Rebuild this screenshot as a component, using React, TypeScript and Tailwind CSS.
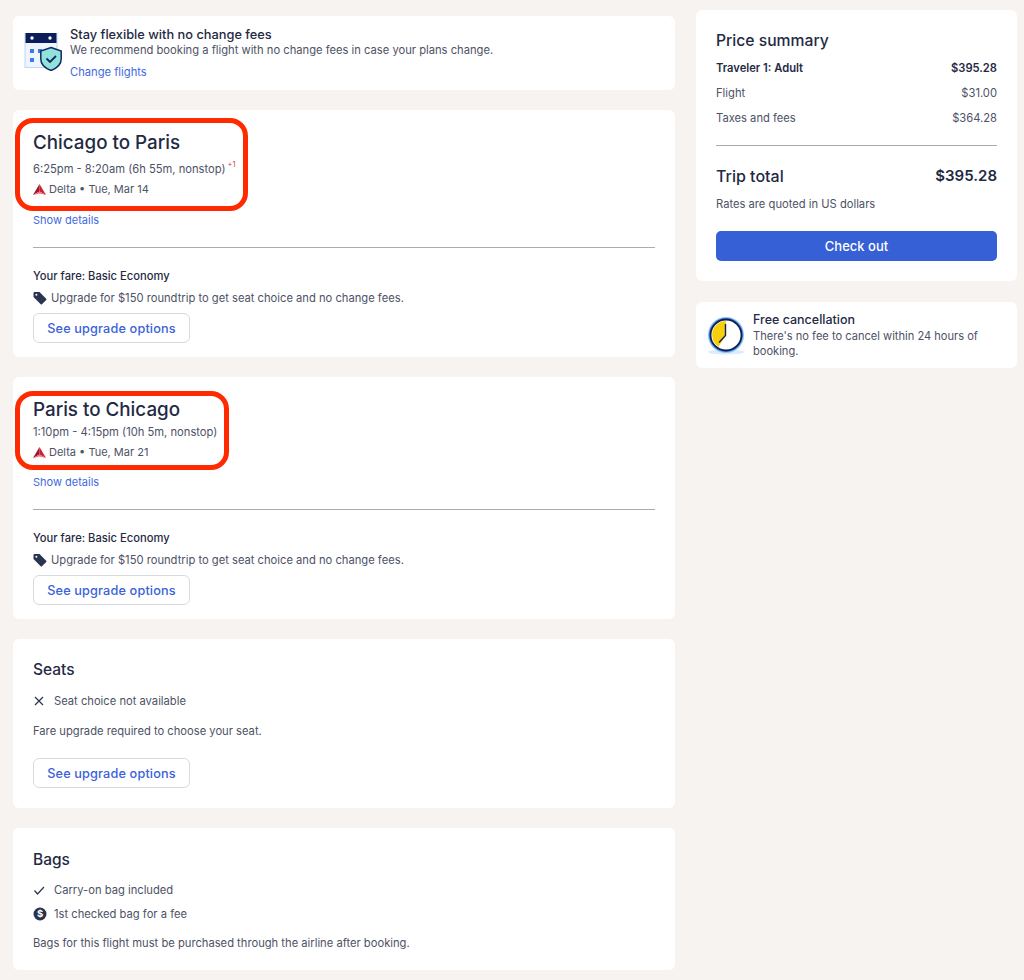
import React from "react";

const ink = "text-[#1f2a44]";
const body = "text-[#4d5266]";

function DeltaLogo() {
  return (
    <svg width="13" height="11" viewBox="0 0 13 11" className="shrink-0">
      <path d="M6.5 0 L13 11 L6.5 7.6 Z" fill="#d0202f" />
      <path d="M6.5 0 L0 11 L6.5 7.6 Z" fill="#a01530" />
      <path d="M0 11 L6.5 7.6 L13 11 L6.5 9.4 Z" fill="#e8707a" />
    </svg>
  );
}

function TagIcon() {
  return (
    <svg width="14" height="14" viewBox="0 0 14 14" className="shrink-0">
      <path d="M0.5 2 Q0.5 1 1.5 1 L6.5 1 L13.2 7.7 Q13.8 8.3 13.2 8.9 L8.9 13.2 Q8.3 13.8 7.7 13.2 L0.5 6 Z" fill="#2a3350" />
      <circle cx="3.4" cy="3.8" r="1" fill="#fff" />
    </svg>
  );
}

function Shield() {
  return (
    <svg width="38" height="42" viewBox="0 0 38 42" className="shrink-0">
      <rect x="1" y="4.5" width="32" height="34" fill="#eef5fd" stroke="#bcd8f8" strokeWidth="1" />
      <rect x="1.5" y="4" width="31" height="10" fill="#0b1e5b" />
      <circle cx="8" cy="9" r="1.7" fill="#fff" />
      <circle cx="26" cy="9" r="1.7" fill="#fff" />
      <rect x="6" y="20" width="4" height="4" fill="#3f7be8" />
      <rect x="14" y="20" width="4" height="4" fill="#3f7be8" />
      <rect x="6" y="29" width="4" height="4" fill="#3f7be8" />
      <path d="M27 18.5 L37.2 22 V30 Q37.2 37.5 27 41.5 Q16.8 37.5 16.8 30 V22 Z" fill="#8fe3dc" stroke="#14285f" strokeWidth="1.5" />
      <path d="M22.5 29.5 L26 33 L32 27" fill="none" stroke="#14285f" strokeWidth="1.8" />
    </svg>
  );
}

function ClockIcon() {
  return (
    <svg width="38" height="38" viewBox="0 0 38 38" className="shrink-0">
      <ellipse cx="19" cy="35" rx="18" ry="2.5" fill="#dcecfd" />
      <circle cx="19" cy="18" r="18" fill="#8cc2f8" />
      <circle cx="19" cy="18" r="17" fill="#3b8bef" />
      <circle cx="19" cy="18" r="15.5" fill="#fff" stroke="#11204f" strokeWidth="1.8" />
      <path d="M19 18 V4 A14 14 0 0 0 11.5 29.8 Z" fill="#f9cf0c" />
      <path d="M18.5 7 V18.5 L12 25.5" fill="none" stroke="#11204f" strokeWidth="1.4" />
    </svg>
  );
}

function UpgradeButton() {
  return (
    <button className="h-[30px] w-[157px] rounded-[6px] border border-[#d9dade] bg-white pt-[1px] text-[12.7px] font-medium tracking-[0.15px] text-[#3a62d8]">
      See upgrade options
    </button>
  );
}

function Flight({ title, time, plus, date, ringClass, timeClass, detailsClass, height }: { title: string; time: string; plus?: boolean; date: string; ringClass: string; timeClass: string; detailsClass: string; height: string }) {
  return (
    <section className={`relative rounded-[6px] bg-white px-5 pt-[20px] ${height}`}>
      <div className={`absolute rounded-[18px] border-[5px] border-[#ff2a00] ${ringClass}`} />
      <h2 className={`text-[18.8px] leading-[26px] font-medium ${ink}`}>{title}</h2>
      <div className={`flex items-start text-[11.2px] leading-[18px] ${body} ${timeClass}`}>
        {time}
        {plus && <span className="mt-[-4px] ml-[2px] text-[7.5px] text-[#d9403a]">+1</span>}
      </div>
      <div className={`mt-[2px] flex items-center gap-[3px] text-[11px] leading-[18px] ${body}`}>
        <DeltaLogo />
        <span>Delta • {date}</span>
      </div>
      <a className={`block text-[11px] leading-[16px] text-[#3f6ae0] ${detailsClass}`}>Show details</a>
      <hr className="mt-[19px] border-t border-[#a9abb2]" />
      <div className={`mt-[20px] text-[11.2px] leading-[16px] font-medium ${ink}`}>Your fare: Basic Economy</div>
      <div className={`mt-[5px] flex items-center gap-[4px] text-[11.2px] leading-[18px] ${body}`}>
        <TagIcon />
        <span>Upgrade for $150 roundtrip to get seat choice and no change fees.</span>
      </div>
      <div className="mt-[6px]">
        <UpgradeButton />
      </div>
    </section>
  );
}

function Row({ l, r, bold }: { l: string; r: string; bold?: boolean }) {
  return (
    <div className={`flex h-[25px] items-center justify-between text-[11.2px] ${bold ? `font-semibold ${ink}` : body}`}>
      <span>{l}</span>
      <span>{r}</span>
    </div>
  );
}

export default function App() {
  return (
    <div className="flex h-[980px] w-[1024px] items-start gap-[21px] overflow-hidden bg-[#f6f3f1] pl-[13px] font-['Inter',sans-serif]">
      <main className="mt-[16px] flex w-[662px] flex-col gap-[20px]">
        <section className="flex h-[74px] gap-[8px] rounded-[6px] bg-white pt-[11px] pl-[11px]">
          <div className="mt-[2px]"><Shield /></div>
          <div className="min-w-0">
            <div className={`text-[12.8px] leading-[16px] font-medium ${ink}`}>Stay flexible with no change fees</div>
            <div className={`text-[11.2px] leading-[15px] ${body}`}>We recommend booking a flight with no change fees in case your plans change.</div>
            <a className="mt-[6px] block text-[11.2px] leading-[16px] text-[#3f6ae0]">Change flights</a>
          </div>
        </section>

        <Flight title="Chicago to Paris" time="6:25pm - 8:20am (6h 55m, nonstop)" plus date="Tue, Mar 14" ringClass="left-[2px] top-[8px] h-[93px] w-[233px]" timeClass="mt-[4px]" detailsClass="mt-[14px]" height="h-[247px]" />
        <Flight title="Paris to Chicago" time="1:10pm - 4:15pm (10h 5m, nonstop)" date="Tue, Mar 21" ringClass="left-[2px] top-[14px] h-[79px] w-[214px]" timeClass="mt-0" detailsClass="mt-[13px]" height="h-[242px]" />

        <section className="h-[169px] rounded-[6px] bg-white px-5 pt-[21px]">
          <h2 className={`text-[15.5px] leading-[20px] font-medium ${ink}`}>Seats</h2>
          <div className={`mt-[12px] flex items-center gap-[9px] text-[11.2px] leading-[18px] ${body}`}>
            <svg width="12" height="12" viewBox="0 0 12 12" className="shrink-0"><path d="M2 2 L10 10 M10 2 L2 10" stroke="#2a3350" strokeWidth="1.2" /></svg>
            <span>Seat choice not available</span>
          </div>
          <div className={`mt-[12px] text-[11.2px] leading-[18px] ${body}`}>Fare upgrade required to choose your seat.</div>
          <div className="mt-[18px]"><UpgradeButton /></div>
        </section>

        <section className="h-[142px] rounded-[6px] bg-white px-5 pt-[22px]">
          <h2 className={`text-[15.5px] leading-[20px] font-medium ${ink}`}>Bags</h2>
          <div className={`mt-[11px] flex items-center gap-[9px] text-[11.2px] leading-[18px] ${body}`}>
            <svg width="12" height="12" viewBox="0 0 12 12" className="shrink-0"><path d="M1.5 6.5 L4.5 10 L11 3" fill="none" stroke="#2a3350" strokeWidth="1.2" /></svg>
            <span>Carry-on bag included</span>
          </div>
          <div className={`mt-[6px] flex items-center gap-[7px] text-[11.2px] leading-[18px] ${body}`}>
            <svg width="14" height="14" viewBox="0 0 14 14" className="shrink-0"><circle cx="7" cy="7" r="6.5" fill="#2a3350" /><text x="7" y="10.3" textAnchor="middle" fontSize="9.5" fontWeight="700" fill="#fff">$</text></svg>
            <span>1st checked bag for a fee</span>
          </div>
          <div className={`mt-[11px] text-[11.2px] leading-[18px] ${body}`}>Bags for this flight must be purchased through the airline after booking.</div>
        </section>
      </main>

      <aside className="mt-[10px] flex w-[321px] flex-col gap-[21px]">
        <section className="h-[271px] rounded-[6px] bg-white px-5 pt-[21px]">
          <h2 className={`text-[15.7px] leading-[20px] font-medium ${ink}`}>Price summary</h2>
          <div className="mt-[5px]">
            <Row l="Traveler 1: Adult" r="$395.28" bold />
            <Row l="Flight" r="$31.00" />
            <Row l="Taxes and fees" r="$364.28" />
          </div>
          <hr className="mt-[14px] border-t border-[#a9abb2]" />
          <div className={`mt-[19px] flex items-center justify-between text-[16px] leading-[22px] font-medium ${ink}`}>
            <span>Trip total</span>
            <span className="text-[15px] font-semibold">$395.28</span>
          </div>
          <div className={`mt-[8px] text-[11.2px] leading-[18px] ${body}`}>Rates are quoted in US dollars</div>
          <button className="mt-[18px] h-[30px] w-full rounded-[5px] bg-[#3560d6] pt-[1px] text-[13px] font-medium text-white">Check out</button>
        </section>
        <section className="flex h-[66px] gap-[8px] rounded-[6px] bg-white pt-[10px] pl-[11px]">
          <div className="mt-[5px]"><ClockIcon /></div>
          <div>
            <div className={`text-[12.5px] leading-[16px] font-medium ${ink}`}>Free cancellation</div>
            <div className={`mt-[1px] w-[240px] text-[11.1px] leading-[15px] ${body}`}>There's no fee to cancel within 24 hours of booking.</div>
          </div>
        </section>
      </aside>
    </div>
  );
}
